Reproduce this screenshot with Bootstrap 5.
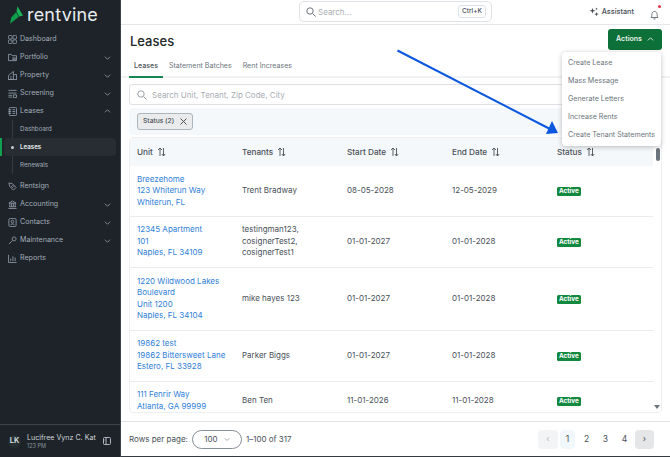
<!doctype html>
<html lang="en"><head><meta charset="utf-8"><title>Leases</title>
<link href="https://cdn.jsdelivr.net/npm/bootstrap@5.3.0/dist/css/bootstrap.min.css" rel="stylesheet">
<style>
html,body{height:457px;overflow:hidden}
body{font-family:Inter,"Liberation Sans",sans-serif;font-size:9px;color:#343a40;background:#fff}
.shell{height:457px;width:670px}
.side{width:121px;flex:none;background:#1d2328;color:#aeb7c2;border-right:1px solid #3c4248}
.logo-row{height:30px;padding:0 0 0 10px;gap:4px}
.logo-word{font-size:18px;line-height:1;color:#e9ecef;font-weight:400;letter-spacing:.2px}
.nav-item-x{height:18px;padding:0 9px 0 8px;font-size:7.1px;color:#a3adba;gap:3px}
.nav-item-x svg.ic{width:9px;height:9px;flex:none}
.nav-item-x .chev{margin-left:auto;width:7px;height:7px}
.sub-x{height:18px;font-size:6.2px;padding-left:20px;color:#a3adba}
.sub-wrap{position:relative;margin-bottom:3px}
.sub-wrap::before{content:"";position:absolute;left:12px;top:0;bottom:0;width:1px;background:#353b41}
.sub-on{background:#272d33;color:#eef0f2;font-weight:600;border-radius:4px;margin:0 4px;padding-left:7px;gap:6px;position:relative;z-index:1}
.sub-on i{width:3px;height:3px;border-radius:50%;background:#c8ced4;display:block}
.green-tick{position:absolute;left:0;top:0;bottom:0;width:2px;background:#12a150;z-index:2}
.user-row{border-top:1px solid #3c4248;padding:0 9px 0 8px;gap:2px;height:33px}
.avatar{width:13px;height:13px;border-radius:50%;background:#262e32;color:#dfe3e6;font-size:7.5px;font-weight:600;flex:none}
.user-name{font-size:7.1px;color:#cfd4d9;line-height:9px;white-space:nowrap}
.user-sub{font-size:5.5px;color:#8a939c;line-height:8px}
.main-x{min-width:0}
.topbar{height:25px;border-bottom:1px solid #e5e7ea;flex:none;padding-right:11px}
.global-search{position:absolute;left:299px;top:1px;width:193px;height:21px;border:1px solid #dee2e6;border-radius:5px;padding:0 5px 0 6px;color:#a9aeb4;font-size:8px;gap:2px}
.kbd-x{margin-left:auto;border:1px solid #dee2e6;border-radius:3px;font-size:6.5px;padding:1px 3px;color:#495057;font-weight:500}
.assist{font-size:7.3px;font-weight:500;color:#495057;gap:3px;margin-right:16px}
.bell{position:relative;width:9px;height:10px}
.bell b{position:absolute;right:-2px;top:-2px;width:3px;height:3px;border-radius:50%;background:#dc3545}
.head-x{padding:5px 9px 0 9px;height:26px;flex:none}
.title-x{font-size:13px;font-weight:500;color:#212529;margin:0;line-height:22px}
.actions-x{position:absolute;left:608px;top:29px;width:54px;height:21px;background:#0c7038;color:#e9f3ed;font-size:7px;font-weight:600;border-radius:3px;gap:5px;border:0;padding:0}
.tabs-x{height:26px;flex:none;padding:0 8px;border-bottom:2px solid #f1f2f4;margin-top:1px}
.tab-x{font-size:7.05px;padding:5px 5px 0 5px;margin-right:1px;color:#6c757d;margin-bottom:-2px;border-bottom:2px solid transparent;height:26px}
.tab-on{color:#495057;border-bottom-color:#198754;font-weight:500}
.tool-area{padding:6px 9px 0 8px;flex:none}
.lease-search{height:21px;border:1px solid #dee2e6;border-radius:3px;padding:0 7px;color:#a8adb3;font-size:8px;gap:5px}
.filter-band{height:27px;background:#f5f8fb;border-radius:4px;margin-top:3px;padding:0 8px}
.chip-x{height:17px;background:#e9ebed;border:1px solid #adb5bd;border-radius:3px;padding:0 5px;font-size:6.7px;gap:6px;color:#495057;font-weight:500}
.table-card{position:relative;margin:2px 8px 8px 8px;border:1px solid #eceef0;border-radius:4px;overflow:hidden;flex:none;height:276px}
.tbl{table-layout:fixed;width:524px;margin:0;font-size:8px}
.tbl th{height:28px;background:#f5f8fb;font-weight:500;color:#495057;font-size:8.2px;vertical-align:middle;border-bottom:0;padding:0 0 0 7px}
.tbl td{vertical-align:middle;padding:0 0 0 7px;color:#495057;line-height:11.5px;border-bottom:1px solid #e9ecef;white-space:nowrap}
.tbl a{color:#2f80d8;text-decoration:none;display:block}
.sort-ic{width:9px;height:10px;margin-left:4px;vertical-align:-2px}
.pill-x{display:inline-block;background:#12893f;color:#fff;font-size:6.3px;font-weight:700;padding:0 2px;line-height:9px;border-radius:1.5px}
.sb-track{position:absolute;right:0;top:0;bottom:0;width:8px;background:#fff;z-index:2}
.sb-thumb{position:absolute;right:1px;top:10px;width:4px;height:13px;background:#6c757d;border-radius:2px}
.sb-down{position:absolute;right:1px;bottom:3px;width:0;height:0;border-left:3px solid transparent;border-right:3px solid transparent;border-top:4px solid #6c757d}
.foot-x{flex:none;height:35px;border-top:1px solid #e1e3e6;padding:0 16px 0 8px;font-size:8px;color:#495057;gap:4px}
.rows-sel{width:50px;height:19px;border:1px solid #868e96;border-radius:10px;font-size:8px;gap:6px}
.pg{width:19px;height:19px;border-radius:4px;font-size:8.5px;color:#495057;flex:none}
.pg-prev{background:#f3f4f5;color:#adb5bd;width:20px}.pg-cur{background:#f2f7fc;width:15px;margin:0 2px}.pg-next{background:#e4e6e8;margin-left:1px}
.menu-x{position:absolute;left:562px;top:52px;width:99px;height:94px;background:#fff;border-radius:4px;box-shadow:0 1px 5px rgba(0,0,0,.25);z-index:5;padding:2px 0 0 6px;font-size:7.1px;color:#6c757d}
.menu-x div{height:18px;display:flex;align-items:center;white-space:nowrap}
.arrow-x{position:absolute;left:390px;top:45px;width:175px;height:95px;z-index:6;pointer-events:none}
.bottom-strip{position:absolute;left:121px;right:0;bottom:0;height:1px;background:#343a40}
</style></head><body>
<div class="shell d-flex position-relative">
<aside class="side d-flex flex-column">
 <div class="logo-row d-flex align-items-center">
  <svg width="13" height="18" viewBox="0 0 14 19"><path d="M8 0 14 10 10 11 7 6z" fill="#19b45a"/><path d="M6.500 6.500 9.500 11.500 0 19 1.500 12z" fill="#0e9d4a"/></svg>
  <span class="logo-word">rentvine</span>
 </div>
 <div class="nav-item-x d-flex align-items-center"><svg class="ic" viewBox="0 0 10 10" fill="none" stroke="#8b95a1"><rect x=".5" y=".5" width="4" height="4" rx="1"/><rect x="5.500" y=".5" width="4" height="4" rx="1"/><rect x=".5" y="5.500" width="4" height="4" rx="1"/><rect x="5.500" y="5.500" width="4" height="4" rx="1"/></svg>Dashboard</div>
 <div class="nav-item-x d-flex align-items-center"><svg class="ic" viewBox="0 0 10 10" fill="none" stroke="#8b95a1"><path d="M.5 8.500V1.500h3l1 1.500h5v5.500z"/><rect x="5.500" y="5.500" width="2.500" height="2" /></svg>Portfolio<svg class="chev" viewBox="0 0 8 8" fill="none" stroke="#8b95a1"><path d="M1 3l3 3 3-3"/></svg></div>
 <div class="nav-item-x d-flex align-items-center"><svg class="ic" viewBox="0 0 10 10" fill="none" stroke="#8b95a1"><path d="M.5 9.500V5L6 .5v9zM6 4h3.500v5.500M0 9.500h10M2.500 6.500h1.500M2.500 8h1.500"/></svg>Property<svg class="chev" viewBox="0 0 8 8" fill="none" stroke="#8b95a1"><path d="M1 3l3 3 3-3"/></svg></div>
 <div class="nav-item-x d-flex align-items-center"><svg class="ic" viewBox="0 0 10 10" fill="none" stroke="#8b95a1"><path d="M.5 1.500h9M.5 4.500h9M.5 7h4M.5 9h4M6 6.500h3.500v3H6z"/></svg>Screening<svg class="chev" viewBox="0 0 8 8" fill="none" stroke="#8b95a1"><path d="M1 3l3 3 3-3"/></svg></div>
 <div class="nav-item-x d-flex align-items-center"><svg class="ic" viewBox="0 0 10 10" fill="none" stroke="#8b95a1"><rect x="1.500" y=".5" width="8" height="9" rx="1"/><path d="M.5 3h3M.5 5h3M.5 7h3M5 3h3M5 5h3M5 7h3"/></svg>Leases<svg class="chev" viewBox="0 0 8 8" fill="none" stroke="#8b95a1"><path d="M1 5l3-3 3 3"/></svg></div>
 <div class="sub-wrap">
  <div class="sub-x d-flex align-items-center">Dashboard</div>
  <div class="position-relative"><span class="green-tick"></span><div class="sub-x sub-on d-flex align-items-center"><i></i>Leases</div></div>
  <div class="sub-x d-flex align-items-center">Renewals</div>
 </div>
 <div class="nav-item-x d-flex align-items-center"><svg class="ic" viewBox="0 0 10 10" fill="none" stroke="#8b95a1"><path d="M1 1l4 1 4 4-3 3-4-4zM3.500 4.500l2 2M5 3.500l2 2"/></svg>Rentsign</div>
 <div class="nav-item-x d-flex align-items-center"><svg class="ic" viewBox="0 0 10 10" fill="none" stroke="#8b95a1"><path d="M1 3.500 5 1l4 2.500zM2 3.500v4M4 3.500v4M6 3.500v4M8 3.500v4M1 7.500h8M.5 9.500h9"/></svg>Accounting<svg class="chev" viewBox="0 0 8 8" fill="none" stroke="#8b95a1"><path d="M1 3l3 3 3-3"/></svg></div>
 <div class="nav-item-x d-flex align-items-center"><svg class="ic" viewBox="0 0 10 10" fill="none" stroke="#8b95a1"><rect x="1" y=".5" width="8" height="9" rx="1.500"/><circle cx="5" cy="4" r="1.500"/><path d="M3 8c0-2 4-2 4 0"/></svg>Contacts<svg class="chev" viewBox="0 0 8 8" fill="none" stroke="#8b95a1"><path d="M1 3l3 3 3-3"/></svg></div>
 <div class="nav-item-x d-flex align-items-center"><svg class="ic" viewBox="0 0 10 10" fill="none" stroke="#8b95a1"><circle cx="6.800" cy="3.200" r="2.200"/><path d="M5 5 1 9"/></svg>Maintenance<svg class="chev" viewBox="0 0 8 8" fill="none" stroke="#8b95a1"><path d="M1 3l3 3 3-3"/></svg></div>
 <div class="nav-item-x d-flex align-items-center"><svg class="ic" viewBox="0 0 10 10" fill="none" stroke="#8b95a1"><path d="M.5 1v8.500h9M3 8V5M5.500 8V2.500M8 8V4"/></svg>Reports</div>
 <div class="user-row d-flex align-items-center mt-auto">
  <div class="avatar d-flex align-items-center justify-content-center">LK</div>
  <div class="ms-1"><div class="user-name">Lucifree Vynz C. Kat</div><div class="user-sub">123 PM</div></div>
  <svg class="ms-auto flex-none" width="8" height="8" viewBox="0 0 8 8" fill="none" stroke="#aeb7c2"><rect x=".5" y=".5" width="7" height="7" rx="1"/><path d="M3 .5v7M1.500 3h.6"/></svg>
 </div>
</aside>
<main class="main-x flex-grow-1 d-flex flex-column">
 <div class="topbar d-flex align-items-center justify-content-end">
  <div class="assist d-flex align-items-center"><svg width="10" height="10" viewBox="0 0 10 10" fill="#495057"><path d="M3.500 1l.8 2 2 .8-2 .8-.8 2-.8-2-2-.8 2-.8zM7.500 5l.6 1.500 1.500.6-1.500.6-.6 1.500-.6-1.500-1.500-.6 1.500-.6zM7.500.5l.4 1 1 .4-1 .4-.4 1-.4-1-1-.4 1-.4z"/></svg>Assistant</div>
  <div class="bell"><svg width="9" height="10" viewBox="0 0 9 10" fill="none" stroke="#6c757d"><path d="M1 7.500c1-1 .7-2.500 1-4 .3-1.500 1.300-2 2.500-2s2.200.5 2.500 2c.3 1.500 0 3 1 4zM3.500 9h2"/></svg><b></b></div>
 </div>
 <div class="head-x"><h1 class="title-x">Leases</h1></div>
 <div class="tabs-x d-flex align-items-center">
  <div class="tab-x tab-on d-flex align-items-center">Leases</div><div class="tab-x d-flex align-items-center">Statement Batches</div><div class="tab-x d-flex align-items-center">Rent Increases</div>
 </div>
 <div class="tool-area">
  <div class="lease-search d-flex align-items-center"><svg width="10" height="10" viewBox="0 0 10 10" fill="none" stroke="#9aa0a6"><circle cx="4" cy="4" r="3.200"/><path d="M6.500 6.500 9.500 9.500"/></svg>Search Unit, Tenant, Zip Code, City</div>
  <div class="filter-band d-flex align-items-center"><div class="chip-x d-flex align-items-center">Status (2)<svg width="7" height="7" viewBox="0 0 7 7" stroke="#495057"><path d="M.5.5l6 6M6.500.5l-6 6"/></svg></div></div>
 </div>
 <div class="table-card">
  <table class="table tbl">
   <colgroup><col style="width:105px"><col style="width:105px"><col style="width:105px"><col style="width:105px"><col style="width:104px"></colgroup>
   <thead><tr><th>Unit<svg class="sort-ic" viewBox="0 0 9 10" fill="none" stroke="#495057" stroke-width=".9"><path d="M3 9V1M1 3l2-2 2 2M6.500 1v8M4.800 7l1.700 2 1.700-2"/></svg></th><th>Tenants<svg class="sort-ic" viewBox="0 0 9 10" fill="none" stroke="#495057" stroke-width=".9"><path d="M3 9V1M1 3l2-2 2 2M6.500 1v8M4.800 7l1.700 2 1.700-2"/></svg></th><th>Start Date<svg class="sort-ic" viewBox="0 0 9 10" fill="none" stroke="#495057" stroke-width=".9"><path d="M3 9V1M1 3l2-2 2 2M6.500 1v8M4.800 7l1.700 2 1.700-2"/></svg></th><th>End Date<svg class="sort-ic" viewBox="0 0 9 10" fill="none" stroke="#495057" stroke-width=".9"><path d="M3 9V1M1 3l2-2 2 2M6.500 1v8M4.800 7l1.700 2 1.700-2"/></svg></th><th>Status<svg class="sort-ic" viewBox="0 0 9 10" fill="none" stroke="#495057" stroke-width=".9"><path d="M3 9V1M1 3l2-2 2 2M6.500 1v8M4.800 7l1.700 2 1.700-2"/></svg></th></tr></thead>
   <tbody>
   <tr style="height:50px"><td><a href="#">Breezehome<br>123 Whiterun Way<br>Whiterun, FL</a></td><td>Trent Bradway</td><td>08-05-2028</td><td>12-05-2029</td><td><span class="pill-x">Active</span></td></tr>
   <tr style="height:51px"><td><a href="#">12345 Apartment<br>101<br>Naples, FL 34109</a></td><td>testingman123,<br>cosignerTest2,<br>cosignerTest1</td><td>01-01-2027</td><td>01-01-2028</td><td><span class="pill-x">Active</span></td></tr>
   <tr style="height:63px"><td><a href="#">1220 Wildwood Lakes<br>Boulevard<br>Unit 1200<br>Naples, FL 34104</a></td><td>mike hayes 123</td><td>01-01-2027</td><td>01-01-2028</td><td><span class="pill-x">Active</span></td></tr>
   <tr style="height:51px"><td><a href="#">19862 test<br>19862 Bittersweet Lane<br>Estero, FL 33928</a></td><td>Parker Biggs</td><td>01-01-2027</td><td>01-01-2028</td><td><span class="pill-x">Active</span></td></tr>
   <tr style="height:39px"><td><a href="#">111 Fenrir Way<br>Atlanta, GA 99999</a></td><td>Ben Ten</td><td>11-01-2026</td><td>11-01-2028</td><td><span class="pill-x">Active</span></td></tr>
   </tbody>
  </table>
  <div class="sb-track"><span class="sb-thumb"></span><span class="sb-down"></span></div>
 </div>
 <div class="foot-x d-flex align-items-center">
  <span>Rows per page:</span>
  <div class="rows-sel d-flex align-items-center justify-content-center">100<svg width="6" height="6" viewBox="0 0 8 8" fill="none" stroke="#868e96"><path d="M1 3l3 3 3-3"/></svg></div>
  <span>1–100 of 317</span>
  <div class="ms-auto d-flex align-items-center">
   <div class="pg pg-prev d-flex align-items-center justify-content-center">‹</div>
   <div class="pg pg-cur d-flex align-items-center justify-content-center">1</div>
   <div class="pg d-flex align-items-center justify-content-center">2</div>
   <div class="pg d-flex align-items-center justify-content-center">3</div>
   <div class="pg d-flex align-items-center justify-content-center">4</div>
   <div class="pg pg-next d-flex align-items-center justify-content-center">›</div>
  </div>
 </div>
</main>
<div class="global-search d-flex align-items-center"><svg width="10" height="10" viewBox="0 0 10 10" fill="none" stroke="#6c757d"><circle cx="4" cy="4" r="3.200"/><path d="M6.500 6.500 9.500 9.500"/></svg>Search...<span class="kbd-x">Ctrl+K</span></div>
<button class="actions-x d-flex align-items-center justify-content-center">Actions<svg width="7" height="7" viewBox="0 0 8 8" fill="none" stroke="#e9f3ed"><path d="M1 5l3-3 3 3"/></svg></button>
<div class="menu-x"><div>Create Lease</div><div>Mass Message</div><div>Generate Letters</div><div>Increase Rents</div><div>Create Tenant Statements</div></div>
<svg class="arrow-x" viewBox="0 0 175 95"><path d="M7.500 5.500 160 84" stroke="#0b57e0" stroke-width="2" fill="none"/><path d="M168 88 156 89 162 76z" fill="#0b57e0"/></svg>
<div class="bottom-strip"></div>
</div>
</body></html>
